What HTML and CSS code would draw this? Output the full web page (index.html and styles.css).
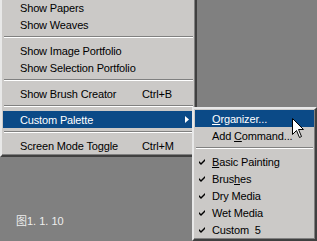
FILE: index.html
```html
<!DOCTYPE html>
<html>
<head>
<meta charset="utf-8">
<link rel="stylesheet" href="styles.css">
</head>
<body>
<div class="menu main">
  <div class="item"><span class="label">Show Papers</span></div>
  <div class="item"><span class="label">Show Weaves</span></div>
  <div class="sep"></div>
  <div class="item"><span class="label">Show Image Portfolio</span></div>
  <div class="item"><span class="label">Show Selection Portfolio</span></div>
  <div class="sep"></div>
  <div class="item"><span class="label">Show Brush Creator</span><span class="key">Ctrl+B</span></div>
  <div class="sep"></div>
  <div class="item active"><span class="label">Custom Palette</span><span class="key"></span><svg class="arrow" width="4" height="7" viewBox="0 0 4 7"><path d="M0 0 L4 3.5 L0 7 Z" fill="#fff"/></svg></div>
  <div class="sep"></div>
  <div class="item"><span class="label">Screen Mode Toggle</span><span class="key">Ctrl+M</span></div>
</div>

<div class="menu sub">
  <div class="item active"><span class="label"><u>O</u>rganizer...</span></div>
  <div class="item"><span class="label">Add <u>C</u>ommand...</span></div>
  <div class="sep"></div>
  <div class="item"><svg class="check" width="7" height="7" viewBox="0 0 7 7"><path d="M0 2 L2 4 L6 0 L6 2 L2 6 L0 4 Z" fill="#000"/></svg><span class="label"><u>B</u>asic Painting</span></div>
  <div class="item"><svg class="check" width="7" height="7" viewBox="0 0 7 7"><path d="M0 2 L2 4 L6 0 L6 2 L2 6 L0 4 Z" fill="#000"/></svg><span class="label">Brus<u>h</u>es</span></div>
  <div class="item"><svg class="check" width="7" height="7" viewBox="0 0 7 7"><path d="M0 2 L2 4 L6 0 L6 2 L2 6 L0 4 Z" fill="#000"/></svg><span class="label">Dry Media</span></div>
  <div class="item"><svg class="check" width="7" height="7" viewBox="0 0 7 7"><path d="M0 2 L2 4 L6 0 L6 2 L2 6 L0 4 Z" fill="#000"/></svg><span class="label">Wet Media</span></div>
  <div class="item"><svg class="check" width="7" height="7" viewBox="0 0 7 7"><path d="M0 2 L2 4 L6 0 L6 2 L2 6 L0 4 Z" fill="#000"/></svg><span class="label">Custom&nbsp; 5</span></div>
</div>

<div class="caption">图1. 1. 10</div>

<svg class="cursor" width="12" height="20" viewBox="0 0 12 20"><path d="M0.5 0.5 L0.5 16.5 L4.5 12.5 L7.5 19.5 L9.5 18.5 L6.5 11.5 L11.5 11.5 Z" fill="#fff" stroke="#000" stroke-width="1"/></svg>
</body>
</html>
```

FILE: styles.css
```css
html, body {
  margin: 0;
  padding: 0;
}
body {
  width: 317px;
  height: 241px;
  overflow: hidden;
  background: #808080;
  font-family: "Liberation Sans", Arial, sans-serif;
  font-size: 11px;
  letter-spacing: -0.15px;
  color: #000;
  position: relative;
}
.menu {
  background: #cbc9c7;
  box-sizing: border-box;
  padding: 1px;
  border-style: solid;
  border-width: 2px;
  border-color: #e8e8e8 #404040 #404040 #e8e8e8;
  box-shadow: inset -1px -1px 0 #808080, inset 1px 1px 0 #cbc9c7;
}
.main {
  width: 197px;
  margin-top: -4px;
}
.sub {
  position: absolute;
  left: 192px;
  top: 107px;
  width: 125px;
}
.item {
  height: 17px;
  display: flex;
  align-items: center;
  padding-left: 17px;
  white-space: nowrap;
  position: relative;
}
.main .label {
  width: 122px;
  flex: none;
}
.key {
  flex: 1;
}
.item.active {
  background: #0b4a87;
  color: #fff;
}
.arrow {
  position: absolute;
  left: 182px;
  top: 5px;
}
.check {
  position: absolute;
  left: 4px;
  top: 6px;
}
.sep {
  height: 0;
  margin: 3px 1px 4px;
  border-top: 1px solid #808080;
  border-bottom: 1px solid #ffffff;
}
u {
  text-decoration: underline;
}
.caption {
  margin: 57px 0 0 16px;
  line-height: 14px;
  color: #eeeeee;
  font-family: "Liberation Sans", "Noto Sans CJK SC", sans-serif;
  font-size: 11px;
  letter-spacing: 0;
}
.cursor {
  position: absolute;
  left: 292px;
  top: 118px;
}
```
